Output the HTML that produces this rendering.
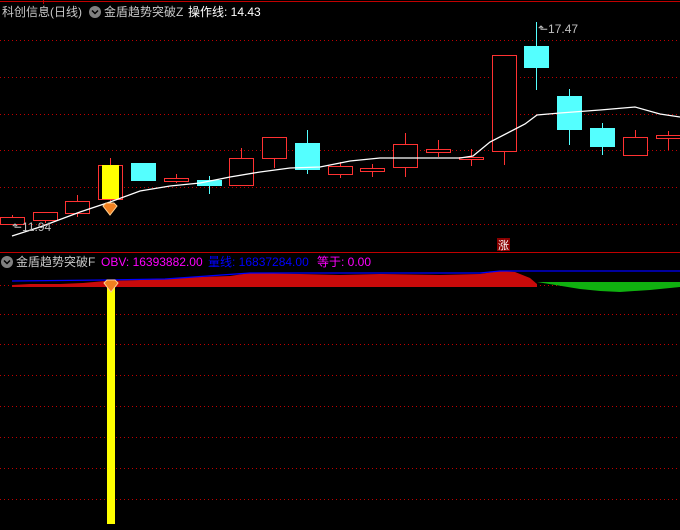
<!DOCTYPE html>
<html><head><meta charset="utf-8"><style>
html,body{margin:0;padding:0;background:#000;width:680px;height:530px;overflow:hidden}
svg{display:block}
text{font-family:"Liberation Sans","Noto Sans CJK SC",sans-serif;font-size:12px}
</style></head><body>
<svg width="680" height="530" xmlns="http://www.w3.org/2000/svg">
<line x1="0" y1="1.5" x2="680" y2="1.5" stroke="#c00000"/>
<line x1="43.5" y1="0" x2="43.5" y2="4" stroke="#c00000"/>
<g stroke="#c00000" stroke-dasharray="1,3">
<line x1="0" y1="40.5" x2="680" y2="40.5"/><line x1="0" y1="77.5" x2="680" y2="77.5"/>
<line x1="0" y1="114.5" x2="680" y2="114.5"/><line x1="0" y1="150.5" x2="680" y2="150.5"/>
<line x1="0" y1="187.5" x2="680" y2="187.5"/><line x1="0" y1="224.5" x2="680" y2="224.5"/>
<line x1="0" y1="285.5" x2="680" y2="285.5"/>
<line x1="0" y1="314.5" x2="680" y2="314.5"/><line x1="0" y1="344.5" x2="680" y2="344.5"/>
<line x1="0" y1="375.5" x2="680" y2="375.5"/><line x1="0" y1="406.5" x2="680" y2="406.5"/>
<line x1="0" y1="437.5" x2="680" y2="437.5"/><line x1="0" y1="468.5" x2="680" y2="468.5"/>
<line x1="0" y1="499.5" x2="680" y2="499.5"/>
</g>
<line x1="0" y1="252.5" x2="680" y2="252.5" stroke="#c00000"/>
<!-- red candles -->
<g stroke="#ff3232" fill="none">
<line x1="12.5" y1="215" x2="12.5" y2="217"/><rect x="0.5" y="217.5" width="24" height="7"/>
<line x1="45.5" y1="220" x2="45.5" y2="223"/><rect x="33.5" y="212.5" width="24" height="8"/>
<line x1="77.5" y1="195" x2="77.5" y2="217"/><rect x="65.5" y="201.5" width="24" height="12" fill="#000"/>
<line x1="110.5" y1="158" x2="110.5" y2="201"/><rect x="98.5" y="165.5" width="24" height="34" fill="#000"/>
<line x1="176.5" y1="174" x2="176.5" y2="183"/><rect x="164.5" y="178.5" width="24" height="3" fill="#000"/>
<line x1="241.5" y1="148" x2="241.5" y2="158"/><rect x="229.5" y="158.5" width="24" height="27" fill="#000"/>
<line x1="274.5" y1="158" x2="274.5" y2="168"/><rect x="262.5" y="137.5" width="24" height="21" fill="#000"/>
<line x1="340.5" y1="162" x2="340.5" y2="178"/><rect x="328.5" y="166.5" width="24" height="8" fill="#000"/>
<line x1="372.5" y1="164" x2="372.5" y2="177"/><rect x="360.5" y="168.5" width="24" height="3" fill="#000"/>
<line x1="405.5" y1="133" x2="405.5" y2="177"/><rect x="393.5" y="144.5" width="24" height="23" fill="#000"/>
<line x1="438.5" y1="140" x2="438.5" y2="157"/><rect x="426.5" y="149.5" width="24" height="3" fill="#000"/>
<line x1="471.5" y1="149" x2="471.5" y2="166"/><rect x="459.5" y="157.5" width="24" height="2" fill="#000"/>
<line x1="504.5" y1="151" x2="504.5" y2="165"/><rect x="492.5" y="55.5" width="24" height="96" fill="#000"/>
<line x1="635.5" y1="130" x2="635.5" y2="137"/><rect x="623.5" y="137.5" width="24" height="18" fill="#000"/>
<line x1="668.5" y1="131" x2="668.5" y2="150"/><rect x="656.5" y="135.5" width="24" height="3" fill="#000"/>
</g>
<rect x="102" y="165" width="17" height="34" fill="#ffff00"/>
<!-- cyan candles -->
<g stroke="#54ffff" fill="#54ffff">
<rect x="131" y="163" width="25" height="18" stroke="none"/>
<line x1="209.5" y1="176" x2="209.5" y2="194"/><rect x="197" y="180" width="25" height="6" stroke="none"/>
<line x1="307.5" y1="130" x2="307.5" y2="174"/><rect x="295" y="143" width="25" height="27" stroke="none"/>
<line x1="536.5" y1="22" x2="536.5" y2="90"/><rect x="524" y="46" width="25" height="22" stroke="none"/>
<line x1="569.5" y1="89" x2="569.5" y2="145"/><rect x="557" y="96" width="25" height="34" stroke="none"/>
<line x1="602.5" y1="123" x2="602.5" y2="155"/><rect x="590" y="128" width="25" height="19" stroke="none"/>
</g>
<polyline fill="none" stroke="#fff" stroke-width="1.3" points="12,236 40,227 80,212 110,202 140,191 170,186 200,183 230,177 260,172 290,168 320,167 350,161 380,158 420,158 460,158 473,156 490,142 525,124 537,115 560,113 600,110 635,107 660,114 680,117"/>
<text x="12" y="231" fill="#c0c0c0">⬑11.94</text>
<text x="538" y="33" fill="#c0c0c0">⬑17.47</text>
<g transform="translate(110,210)"><polygon points="-7,-4 -4,-7 4,-7 7,-4 0,5" fill="#f08020" stroke="#ffd090"/></g>
<rect x="497" y="238" width="13" height="13" fill="#8b0000"/>
<text x="498" y="249" fill="#fff" font-size="11" style="font-size:11px">涨</text>
<!-- header -->
<text x="2" y="16" fill="#c8c8c8">科创信息(日线)</text>
<circle cx="95" cy="12" r="6" fill="#808080"/><path d="M92 10.5l3 3 3-3" stroke="#000" stroke-width="1.5" fill="none"/>
<text x="104" y="16" fill="#c8c8c8">金盾趋势突破Z</text>
<text x="188" y="16" fill="#fff">操作线: 14.43</text>
<circle cx="7" cy="262" r="6" fill="#808080"/><path d="M4 260.5l3 3 3-3" stroke="#000" stroke-width="1.5" fill="none"/>
<text x="16" y="266" fill="#c8c8c8">金盾趋势突破F</text>
<text x="101" y="266" fill="#ff00ff">OBV: 16393882.00</text>
<text x="208" y="266" fill="#0000ff">量线: 16837284.00</text>
<text x="317" y="266" fill="#ff00ff">等于: 0.00</text>
<!-- OBV -->
<polygon fill="#c80a0a" points="12,287 12,285 30,284 60,284 83,283 105,281 140,280 165,279 180,278 200,277 230,276 250,273 300,274 340,275 380,274 440,275 480,274 500,271 515,272 530,278 537,284 537,287"/>
<polygon fill="#10b010" points="537,282 580,289 600,291 620,292 650,290 680,287 680,282"/>
<polyline fill="none" stroke="#0000ff" stroke-width="1.3" points="12,281 105,280 165,279 250,273 480,273 500,271 680,271"/>
<rect x="107" y="280" width="8" height="244" fill="#ffff00"/>
<g transform="translate(111,287)"><polygon points="-7,-4 -4,-7 4,-7 7,-4 0,5" fill="#f08020" stroke="#ffd090"/></g>
</svg>
</body></html>
